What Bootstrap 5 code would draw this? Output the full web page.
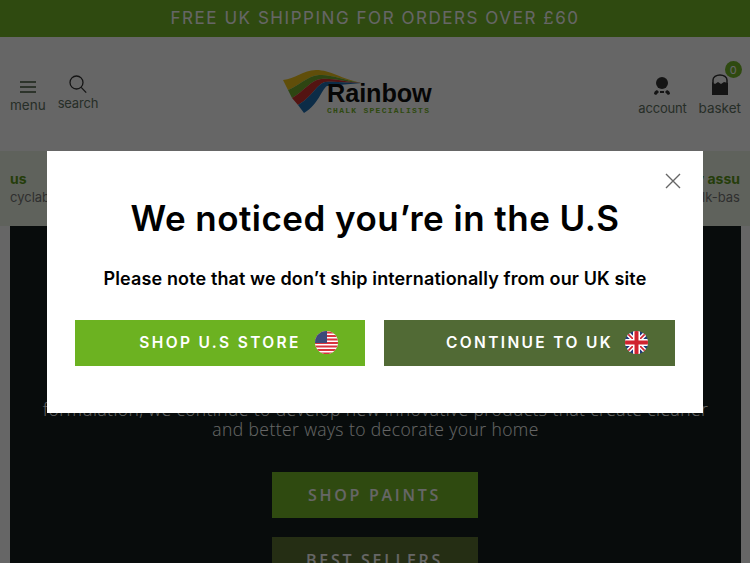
<!DOCTYPE html>
<html lang="en">
<head>
  <meta charset="UTF-8" />
  <meta name="viewport" content="width=device-width, initial-scale=1.0"/>
  <title>Rainbow Chalk Specialists</title>
  <link href="https://cdn.jsdelivr.net/npm/bootstrap@5.3.3/dist/css/bootstrap.min.css" rel="stylesheet" />
  <style>
    html, body { height: 563px; overflow: hidden; }
    body { font-family: Inter, "Liberation Sans", sans-serif; color: #333; background: #fff; }

    .promo-bar { height: 37px; background: #76b82a; color: #fff; font-size: 17px; letter-spacing: 1.55px; }
    .site-head { height: 114px; padding: 0 9px 0 10px; }
    .head-link { color: #5f7364; font-size: 13.5px; line-height: 16px; text-decoration: none; }
    .head-link-tight { font-size: 13px; letter-spacing: -.2px; }
    .head-left { width: 105px; height: 38px; }
    .head-right { width: 140px; padding-top: 2px; }
    .menu-icon { margin: 5px 0 3px; }
    .search-icon { margin-bottom: 1px; }
    .head-icon { margin: 0 0 4px; }
    .basket-count { top: -13px; right: -13px; width: 17px; height: 17px; font-size: 11px; background: #76b82a; color: #fff; }
    .logo-link { width: 150px; height: 48px; }
    .logo-box { top: 0; left: 0; }
    .logo-text { margin: 11px 0 0 44px; }
    .logo-word { font-family: "Liberation Sans", sans-serif; font-weight: 700; font-size: 25.3px; line-height: 24px; color: #111; letter-spacing: -.1px; white-space: nowrap; }
    .logo-tag { font-family: "Liberation Mono", monospace; font-weight: 700; font-size: 8px; line-height: 9px; letter-spacing: 1.27px; color: #76b82a; white-space: nowrap; margin-top: 1px; }

    .usp-strip { height: 75px; background: #eef5e6; padding: 19px 10px 0; font-size: 13px; }
    .usp-title { color: #5c9a1b; font-weight: 700; font-size: 14px; line-height: 18px; }
    .usp-sub { color: #777; line-height: 18px; }

    .hero-block { margin: 0 9px 0 10px; height: 500px; background: #141f1e; color: #fff; padding-top: 173px; font-family: "Open Sans", sans-serif; }
    .hero-copy { font-size: 17.5px; font-weight: 300; line-height: 20px; letter-spacing: .42px; padding: 0 28px; margin-bottom: 33px; }
    .hero-btn { width: 206px; height: 46px; font-size: 16px; font-weight: 600; letter-spacing: 2.7px; color: #fff; border-radius: 0; border: 0; margin: 0 auto 19px; position: relative; left: -1px; }
    .hero-btn-main { background: #76b82a; }
    .hero-btn-alt { background: #5c7434; }

    .modal-backdrop.show { opacity: .6; }
    .store-dialog { max-width: 656px; width: 656px; margin: 151px 0 0 47px; }
    .store-box { height: 262px; border: 0; border-radius: 0; padding: 0 28px; }
    .store-close { top: 22px; right: 22px; width: 16px; height: 16px; background: none; border: 0; padding: 0; line-height: 0; }
    .store-title { font-size: 35px; line-height: 42px; font-weight: 600; color: #000; margin: 46px 0 0; letter-spacing: .47px; white-space: nowrap; }
    .store-sub { font-size: 18px; line-height: 22px; font-weight: 600; color: #000; margin: 29px 0 30px; letter-spacing: .12px; white-space: nowrap; }
    .store-btn { height: 46px; border: 0; border-radius: 0; color: #fff; font-size: 15.5px; font-weight: 600; letter-spacing: 2.35px; }
    .store-btn-us { width: 290px; background: #6cb221; padding-left: 49px; gap: 14px; }
    .store-btn-uk { width: 291px; background: #516a35; padding-left: 47px; gap: 12px; }
    .store-btn svg { margin-top: -1px; }
    .store-btn:hover { color: #fff; }
  </style>
</head>
<body>

  <div class="promo-bar d-flex align-items-center justify-content-center">FREE UK SHIPPING FOR ORDERS OVER £60</div>

  <header class="site-head d-flex align-items-center justify-content-between">
    <div class="head-left d-flex gap-2 align-items-start">
      <a href="#" class="head-link d-flex flex-column align-items-center">
        <svg class="menu-icon" width="18" height="14" viewBox="0 0 18 14" fill="none" stroke="#445a3c" stroke-width="1.6"><path d="M1 2h16M1 7h16M1 12h16"/></svg>
        menu
      </a>
      <a href="#" class="head-link head-link-tight d-flex flex-column align-items-center ms-1">
        <svg class="search-icon" width="18" height="19" viewBox="0 0 18 19" fill="none" stroke="#333" stroke-width="1.3"><circle cx="7.5" cy="7.5" r="6.5"/><path d="M12.2 12.4l5 5.2"/></svg>
        search
      </a>
    </div>

    <a href="#" class="logo-link position-relative d-block text-decoration-none">
      <svg class="position-absolute logo-box" width="80" height="44" viewBox="0 0 80 44">
        <path d="M0 10C12 9 20 0 33 0 48 0 58 9 79 13 60 10 48 4 36 5 24 6 14 17 5 20z" fill="#f0c419"/>
        <path d="M5 20C14 17 24 6 36 5 48 4 60 10 79 13 62 12 50 8 38 9 28 10 20 22 9 28z" fill="#74ad2e"/>
        <path d="M9 28C20 22 28 10 38 9 50 8 62 12 79 13 64 13 52 11 42 12 34 14 28 28 15 35z" fill="#d0322d"/>
        <path d="M15 35C28 28 34 14 42 12 52 11 64 13 79 13L44 16C38 20 36 34 21 43z" fill="#1f6fb2"/>
      </svg>
      <div class="logo-text position-relative">
        <div class="logo-word">Rainbow</div>
        <div class="logo-tag">CHALK SPECIALISTS</div>
      </div>
    </a>

    <div class="head-right d-flex gap-2 justify-content-end align-items-end">
      <a href="#" class="head-link head-link-tight d-flex flex-column align-items-center">
        <svg class="head-icon" width="18" height="20" viewBox="0 0 18 20"><circle cx="9" cy="7" r="6" fill="#333"/><path d="M1 18q0-3 3-4l2 2-3 3zM17 18q0-3-3-4l-2 2 3 3zM7 15h4v2H7z" fill="#333"/></svg>
        account
      </a>
      <a href="#" class="head-link d-flex flex-column align-items-center ms-1">
        <span class="position-relative d-block head-icon" style="height:22px">
          <svg width="18" height="22" viewBox="0 0 18 22" fill="none"><path d="M2 9V6a7 5 0 0 1 14 0v3" stroke="#333" stroke-width="1.5"/><path d="M1 8l3 2 3-2 3 2 3-2 4 1v12H1z" fill="#333"/></svg>
          <span class="basket-count position-absolute rounded-circle d-flex align-items-center justify-content-center">0</span>
        </span>
        basket
      </a>
    </div>
  </header>

  <section class="usp-strip d-flex justify-content-between">
    <div>
      <div class="usp-title">us</div>
      <div class="usp-sub">cyclable</div>
    </div>
    <div class="text-end">
      <div class="usp-title">y assu</div>
      <div class="usp-sub">alk-bas</div>
    </div>
  </section>

  <section class="hero-block text-center">
    <p class="hero-copy">formulation, we continue to develop new innovative products that create cleaner and better ways to decorate your home</p>
    <a href="#" class="btn hero-btn hero-btn-main d-flex align-items-center justify-content-center">SHOP PAINTS</a>
    <a href="#" class="btn hero-btn hero-btn-alt d-flex align-items-center justify-content-center">BEST SELLERS</a>
  </section>

  <div class="modal-backdrop show"></div>
  <div class="modal d-block" tabindex="-1">
    <div class="modal-dialog store-dialog">
      <div class="modal-content store-box position-relative text-center">
        <button type="button" class="store-close position-absolute" aria-label="Close">
          <svg width="16" height="16" viewBox="0 0 16 16" fill="none" stroke="#666" stroke-width="1.4"><path d="M1 1l14 14M15 1L1 15"/></svg>
        </button>
        <h2 class="store-title">We noticed you’re in the U.S</h2>
        <p class="store-sub">Please note that we don’t ship internationally from our UK site</p>
        <div class="d-flex justify-content-between">
          <a href="#" class="btn store-btn store-btn-us d-flex align-items-center justify-content-center">
            SHOP U.S STORE
            <svg width="23" height="23" viewBox="0 0 23 23">
              <defs><clipPath id="roundUs"><circle cx="11.5" cy="11.5" r="11.5"/></clipPath></defs>
              <g clip-path="url(#roundUs)">
                <rect width="23" height="23" fill="#fff"/>
                <path d="M0 1.5h23M0 5h23M0 8.5h23M0 12h23M0 15.5h23M0 19h23M0 22.5h23" stroke="#d8343f" stroke-width="1.8"/>
                <rect width="12" height="12" fill="#3c4a7a"/>
              </g>
            </svg>
          </a>
          <a href="#" class="btn store-btn store-btn-uk d-flex align-items-center justify-content-center">
            CONTINUE TO UK
            <svg width="23" height="23" viewBox="0 0 23 23">
              <defs><clipPath id="roundUk"><circle cx="11.5" cy="11.5" r="11.5"/></clipPath></defs>
              <g clip-path="url(#roundUk)">
                <rect width="23" height="23" fill="#1f3a7d"/>
                <path d="M0 0l23 23M23 0L0 23" stroke="#fff" stroke-width="4.5"/>
                <path d="M0 0l23 23M23 0L0 23" stroke="#d0232f" stroke-width="1.6"/>
                <path d="M11.5 0v23M0 11.5h23" stroke="#fff" stroke-width="7"/>
                <path d="M11.5 0v23M0 11.5h23" stroke="#d0232f" stroke-width="4"/>
              </g>
            </svg>
          </a>
        </div>
      </div>
    </div>
  </div>

  <script src="https://cdn.jsdelivr.net/npm/bootstrap@5.3.3/dist/js/bootstrap.bundle.min.js"></script>
</body>
</html>
